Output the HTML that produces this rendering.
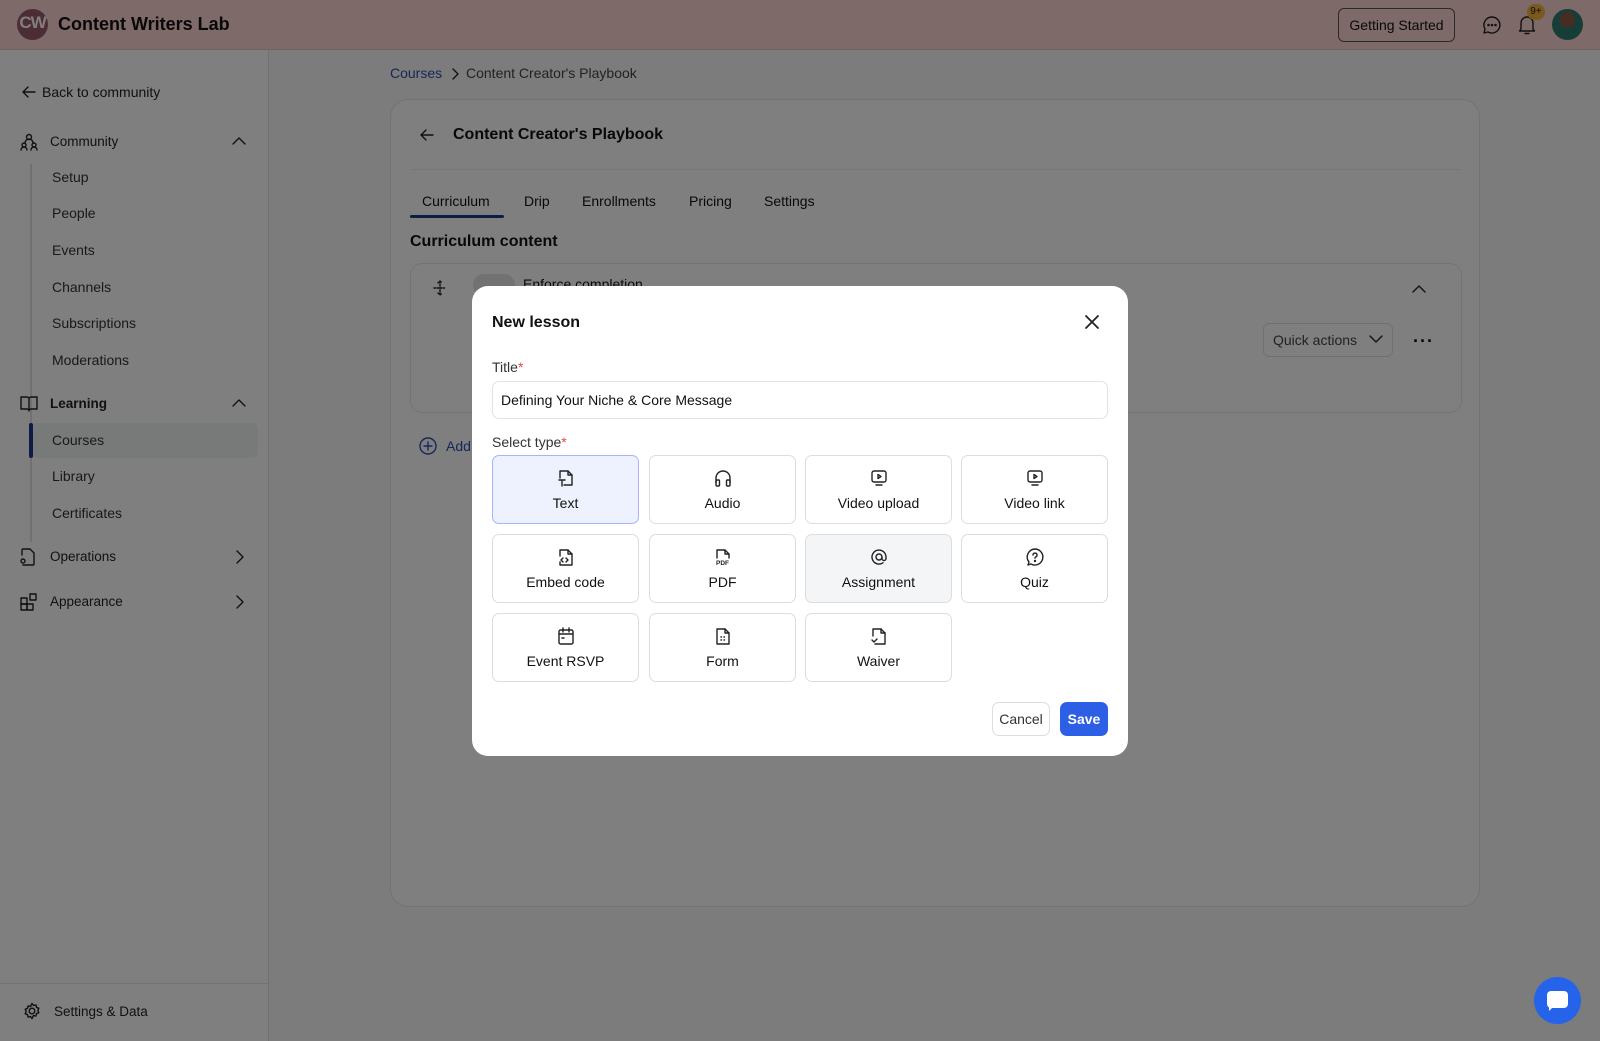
<!DOCTYPE html>
<html><head><meta charset="utf-8">
<style>
*{box-sizing:border-box;margin:0;padding:0}
body{width:1600px;height:1041px;overflow:hidden;font-family:"Liberation Sans",sans-serif;background:#f7f8f7;position:relative;color:#111}
.abs{position:absolute}
.hdr{left:0;top:0;width:1600px;height:50px;background:#fed5d5;border-bottom:1px solid #e8c4c4}
.side{left:0;top:50px;width:269px;height:991px;background:#fff;border-right:1px solid #e5e5e5}
.si{position:absolute;font-size:14px;color:#222}
.sub{position:absolute;left:52px;font-size:14px;color:#333}
.card{left:390px;top:99px;width:1090px;height:808px;background:#fff;border:1px solid #e6e6e6;border-radius:18px}
.overlay{left:0;top:0;width:1600px;height:1041px;background:rgba(0,0,0,0.5)}
.modal{left:472px;top:286px;width:656px;height:470px;background:#fff;border-radius:16px}
.tile{position:absolute;width:147px;height:69px;border:1px solid #dcdde0;border-radius:7px;background:#fff;text-align:center}
.tile svg{position:absolute;left:63px;top:12px}
.tile span{position:absolute;left:0;right:0;top:39px;font-size:14px;color:#111}
svg{fill:none;stroke:#222;stroke-width:1.4;stroke-linecap:round;stroke-linejoin:round}
</style></head><body>
<div class="abs hdr">
  <div class="abs" style="left:17px;top:9px;width:31px;height:31px;border-radius:50%;background:#9b5a6a;color:#fff;font-size:17px;font-weight:bold;text-align:center;line-height:28px;letter-spacing:-1px">CW</div>
  <div class="abs" style="left:58px;top:14px;font-size:18px;font-weight:bold;color:#111">Content Writers Lab</div>
  <div class="abs" style="left:1338px;top:8px;width:117px;height:34px;border:1px solid #555;border-radius:6px;font-size:14px;text-align:center;line-height:32px;color:#111">Getting Started</div>
  <svg class="abs" style="left:1482px;top:15px" width="20" height="20" viewBox="0 0 20 20"><path d="M10 2a8 8 0 1 1-4 15l-4 1 1-4A8 8 0 0 1 10 2z"/><circle cx="6.5" cy="10" r=".6" fill="#222"/><circle cx="10" cy="10" r=".6" fill="#222"/><circle cx="13.5" cy="10" r=".6" fill="#222"/></svg>
  <svg class="abs" style="left:1517px;top:14px" width="20" height="22" viewBox="0 0 20 22"><path d="M4 15V9a6 6 0 0 1 12 0v6l1.5 2h-15z"/><path d="M8 19.5h4"/></svg>
  <div class="abs" style="left:1527px;top:4px;width:18px;height:16px;border-radius:8px;background:#f2b23b;font-size:10px;text-align:center;line-height:16px;color:#222">9+</div>
  <div class="abs" style="left:1552px;top:9px;width:31px;height:31px;border-radius:50%;background:radial-gradient(circle at 50% 35%,#8a5a45 0 30%,#2f7a72 31% 100%)"></div>
</div>
<div class="abs side">
  <svg class="abs" style="left:21px;top:34px" width="16" height="16" viewBox="0 0 16 16"><path d="M14 8H2M7 3L2 8l5 5"/></svg>
  <div class="si" style="left:42px;top:34px">Back to community</div>
  <svg class="abs" style="left:19px;top:82px" width="20" height="20" viewBox="0 0 20 20"><circle cx="10" cy="5" r="2.5"/><path d="M6 11a4 4 0 0 1 8 0M2 18a3 3 0 0 1 6 0M12 18a3 3 0 0 1 6 0"/><circle cx="5" cy="13" r="2"/><circle cx="15" cy="13" r="2"/></svg>
  <div class="si" style="left:50px;top:84px;font-size:13.5px">Community</div>
  <svg class="abs" style="left:232px;top:86px" width="14" height="10" viewBox="0 0 14 10"><path d="M1 8l6-6 6 6"/></svg>
  <div class="abs" style="left:30px;top:114px;width:2px;height:265px;background:#e3e3e3"></div>
  <div class="sub" style="top:119px">Setup</div>
  <div class="sub" style="top:155px">People</div>
  <div class="sub" style="top:192px">Events</div>
  <div class="sub" style="top:229px">Channels</div>
  <div class="sub" style="top:265px">Subscriptions</div>
  <div class="sub" style="top:302px">Moderations</div>
  <svg class="abs" style="left:19px;top:345px" width="20" height="18" viewBox="0 0 20 18"><path d="M2 2h6a2 2 0 0 1 2 2v12a2 2 0 0 0-2-2H2zM18 2h-6a2 2 0 0 0-2 2v12a2 2 0 0 1 2-2h6z"/></svg>
  <div class="si" style="left:50px;top:346px;font-weight:bold;font-size:13.5px">Learning</div>
  <svg class="abs" style="left:232px;top:348px" width="14" height="10" viewBox="0 0 14 10"><path d="M1 8l6-6 6 6"/></svg>
  <div class="abs" style="left:30px;top:372px;width:2px;height:120px;background:#e3e3e3"></div>
  <div class="abs" style="left:31px;top:373px;width:227px;height:35px;background:#f1f2f2;border-radius:6px"></div>
  <div class="abs" style="left:29px;top:373px;width:4px;height:35px;background:#1e3a8a;border-radius:2px"></div>
  <div class="sub" style="top:382px">Courses</div>
  <div class="sub" style="top:418px">Library</div>
  <div class="sub" style="top:455px">Certificates</div>
  <svg class="abs" style="left:19px;top:497px" width="18" height="20" viewBox="0 0 18 20"><path d="M3 8V3a1 1 0 0 1 1-1h7l4 4v11a1 1 0 0 1-1 1H4"/><circle cx="4" cy="14" r="2"/></svg>
  <div class="si" style="left:50px;top:499px;font-size:13.5px">Operations</div>
  <svg class="abs" style="left:235px;top:500px" width="10" height="14" viewBox="0 0 10 14"><path d="M2 1l6 6-6 6"/></svg>
  <svg class="abs" style="left:19px;top:542px" width="20" height="20" viewBox="0 0 20 20"><rect x="2" y="6" width="6" height="6"/><rect x="2" y="12" width="6" height="6"/><rect x="8" y="12" width="6" height="6"/><rect x="11" y="2" width="6" height="6"/></svg>
  <div class="si" style="left:50px;top:544px;font-size:13.5px">Appearance</div>
  <svg class="abs" style="left:235px;top:545px" width="10" height="14" viewBox="0 0 10 14"><path d="M2 1l6 6-6 6"/></svg>
  <div class="abs" style="left:0;top:933px;width:269px;height:1px;background:#e5e5e5"></div>
  <svg class="abs" style="left:23px;top:952px" width="18" height="18" viewBox="0 0 18 18"><circle cx="9" cy="9" r="2.8"/><path d="M9 1.5l1.5 2 2.4-.6.6 2.4 2.3 1-1 2.2 1 2.2-2.3 1-.6 2.4-2.4-.6L9 16.5l-1.5-2-2.4.6-.6-2.4-2.3-1 1-2.2-1-2.2 2.3-1 .6-2.4 2.4.6z"/></svg>
  <div class="si" style="left:54px;top:954px;font-size:13.5px">Settings &amp; Data</div>
</div>
<div class="abs" style="left:390px;top:65px;font-size:14px;color:#2f4fb0">Courses</div>
<svg class="abs" style="left:451px;top:68px" width="8" height="12" viewBox="0 0 8 12"><path d="M2 1l5 5-5 5"/></svg>
<div class="abs" style="left:466px;top:65px;font-size:14px;color:#444">Content Creator's Playbook</div>
<div class="abs card">
  <svg class="abs" style="left:28px;top:27px" width="16" height="16" viewBox="0 0 16 16"><path d="M14 8H2M7 3L2 8l5 5"/></svg>
  <div class="abs" style="left:62px;top:26px;font-size:16px;font-weight:bold;color:#111">Content Creator's Playbook</div>
  <div class="abs" style="left:19px;top:69px;width:1052px;height:1px;background:#eee"></div>
  <div class="abs" style="left:31px;top:93px;font-size:14px">Curriculum</div>
  <div class="abs" style="left:133px;top:93px;font-size:14px">Drip</div>
  <div class="abs" style="left:191px;top:93px;font-size:14px">Enrollments</div>
  <div class="abs" style="left:298px;top:93px;font-size:14px">Pricing</div>
  <div class="abs" style="left:373px;top:93px;font-size:14px">Settings</div>
  <div class="abs" style="left:19px;top:115px;width:94px;height:3px;background:#1e3a8a;border-radius:2px"></div>
  <div class="abs" style="left:19px;top:133px;font-size:16px;font-weight:bold">Curriculum content</div>
  <div class="abs" style="left:19px;top:163px;width:1052px;height:150px;border:1px solid #e6e6e6;border-radius:12px">
    <svg class="abs" style="left:22px;top:16px" width="14" height="16" viewBox="0 0 14 16"><path d="M7 1v14M1 8h12M5 3l2-2 2 2M5 13l2 2 2-2" stroke-dasharray="1.5 1.5"/></svg>
    <div class="abs" style="left:62px;top:10px;width:42px;height:22px;border-radius:11px;background:#e5e5e5"></div>
    <div class="abs" style="left:112px;top:12px;font-size:14px">Enforce completion</div>
    <svg class="abs" style="left:1001px;top:20px" width="14" height="10" viewBox="0 0 14 10"><path d="M1 8l6-6 6 6"/></svg>
    <div class="abs" style="left:852px;top:59px;width:130px;height:34px;border:1px solid #e0e0e0;border-radius:6px;font-size:14px;color:#444;line-height:32px;padding-left:9px">Quick actions</div>
    <svg class="abs" style="left:958px;top:70px" width="14" height="10" viewBox="0 0 14 10"><path d="M1 2l6 6 6-6"/></svg>
    <div class="abs" style="left:1002px;top:67px;font-size:18px;font-weight:bold;letter-spacing:1px">···</div>
  </div>
  <svg class="abs" style="left:28px;top:337px" width="18" height="18" viewBox="0 0 18 18" style="stroke:#2f4fb0"><circle cx="9" cy="9" r="8" stroke="#2f4fb0"/><path d="M9 5v8M5 9h8" stroke="#2f4fb0"/></svg>
  <div class="abs" style="left:55px;top:338px;font-size:14px;color:#2f4fb0">Add</div>
</div>
<div class="abs overlay"></div>
<div class="abs modal">
  <div class="abs" style="left:20px;top:28px;font-size:16px;font-weight:bold;color:#111">New lesson</div>
  <svg class="abs" style="left:612px;top:28px" width="16" height="16" viewBox="0 0 16 16" style="stroke-width:1.8"><path d="M2 2l12 12M14 2L2 14" stroke-width="1.8"/></svg>
  <div class="abs" style="left:20px;top:73px;font-size:14px;color:#333">Title<span style="color:#e5484d">*</span></div>
  <div class="abs" style="left:20px;top:95px;width:616px;height:38px;border:1px solid #e2e2e2;border-radius:7px;font-size:14px;line-height:36px;padding-left:8px;color:#111">Defining Your Niche &amp; Core Message</div>
  <div class="abs" style="left:20px;top:148px;font-size:14px;color:#333">Select type<span style="color:#e5484d">*</span></div>
  <div class="tile" style="left:20px;top:169px;background:#eef2ff;border-color:#a5b4fc"><svg width="20" height="20" viewBox="0 0 20 20"><path d="M4 10V3h8l4 4v10h-8"/><path d="M12 3v4h4M3 12h6M6 12v6"/></svg><span>Text</span></div>
  <div class="tile" style="left:177px;top:169px"><svg width="20" height="20" viewBox="0 0 20 20"><path d="M3 15v-5a7 7 0 0 1 14 0v5"/><rect x="3" y="12" width="3.5" height="6" rx="1"/><rect x="13.5" y="12" width="3.5" height="6" rx="1"/></svg><span>Audio</span></div>
  <div class="tile" style="left:333px;top:169px"><svg width="20" height="20" viewBox="0 0 20 20"><rect x="3" y="3" width="14" height="11" rx="2"/><path d="M9 6.5v4l3-2zM7 17h6"/></svg><span>Video upload</span></div>
  <div class="tile" style="left:489px;top:169px"><svg width="20" height="20" viewBox="0 0 20 20"><rect x="3" y="3" width="14" height="11" rx="2"/><path d="M9 6.5v4l3-2zM7 17h6"/></svg><span>Video link</span></div>
  <div class="tile" style="left:20px;top:248px"><svg width="20" height="20" viewBox="0 0 20 20"><path d="M4 9V3h8l4 4v11H4v-3"/><path d="M12 3v4h4M7 11l-2 2 2 2M10 11l2 2-2 2"/></svg><span>Embed code</span></div>
  <div class="tile" style="left:177px;top:248px"><svg width="20" height="20" viewBox="0 0 20 20"><path d="M4 11V3h8l4 4v4"/><path d="M12 3v4h4"/><text x="3" y="18" font-size="6.5" font-weight="bold" fill="#222" stroke="none" font-family="Liberation Sans">PDF</text></svg><span>PDF</span></div>
  <div class="tile" style="left:333px;top:248px;background:#f4f5f7"><svg width="20" height="20" viewBox="0 0 20 20"><circle cx="10" cy="10" r="3"/><path d="M13 10v1.5a2 2 0 0 0 4 0V10a7 7 0 1 0-3 5.8"/></svg><span>Assignment</span></div>
  <div class="tile" style="left:489px;top:248px"><svg width="20" height="20" viewBox="0 0 20 20"><path d="M10 2a8 8 0 1 1-4 15l-3 1 1-3A8 8 0 0 1 10 2z"/><path d="M8 8a2 2 0 1 1 2.5 2c-.5.2-.5.6-.5 1.2"/><circle cx="10" cy="14" r=".5" fill="#222"/></svg><span>Quiz</span></div>
  <div class="tile" style="left:20px;top:327px"><svg width="20" height="20" viewBox="0 0 20 20"><rect x="3" y="4" width="14" height="14" rx="1.5"/><path d="M3 8h14M7 2v4M13 2v4M6 12h2"/></svg><span>Event RSVP</span></div>
  <div class="tile" style="left:177px;top:327px"><svg width="20" height="20" viewBox="0 0 20 20"><path d="M4 3h8l4 4v11H4z"/><path d="M12 3v4h4M8 11h.5M11 11h.5M8 14h.5M11 14h.5"/></svg><span>Form</span></div>
  <div class="tile" style="left:333px;top:327px"><svg width="20" height="20" viewBox="0 0 20 20"><path d="M4 10V3h8l4 4v11H6"/><path d="M12 3v4h4M3 14l2 2 3-3"/></svg><span>Waiver</span></div>
  <div class="abs" style="left:520px;top:416px;width:58px;height:34px;border:1px solid #ddd;border-radius:7px;font-size:14px;text-align:center;line-height:32px;color:#333">Cancel</div>
  <div class="abs" style="left:588px;top:416px;width:48px;height:34px;background:#2d5ee6;border-radius:7px;font-size:14px;font-weight:bold;text-align:center;line-height:34px;color:#fff">Save</div>
</div>
<div class="abs" style="left:1534px;top:977px;width:47px;height:47px;border-radius:50%;background:#2563eb">
  <div class="abs" style="left:13px;top:14px;width:21px;height:17px;background:#fff;border-radius:4px"></div>
  <div class="abs" style="left:15px;top:29px;width:0;height:0;border-left:5px solid #fff;border-bottom:5px solid transparent"></div>
</div>
</body></html>
